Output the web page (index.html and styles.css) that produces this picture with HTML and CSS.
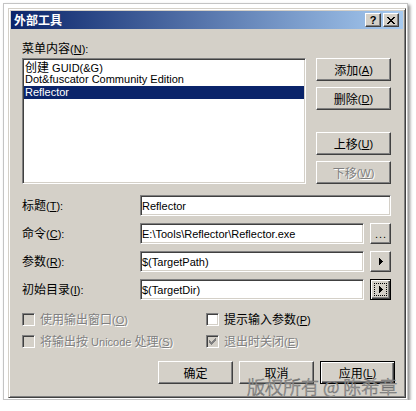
FILE: index.html
```html
<!DOCTYPE html>
<html>
<head>
<meta charset="utf-8">
<title>外部工具</title>
<link rel="stylesheet" href="styles.css">
</head>
<body>
<div class="frame">
  <div class="dialog">
    <div class="titlebar">
      <span class="title">外部工具</span>
      <div class="tbtns">
        <div class="tbtn help">?</div>
        <div class="tbtn close">
          <svg width="8" height="7" viewBox="0 0 8 7" shape-rendering="crispEdges"><path d="M0 0h2v1H0z M6 0h2v1H6z M1 1h2v1H1z M5 1h2v1H5z M2 2h4v1H2z M3 3h2v1H3z M2 4h4v1H2z M1 5h2v1H1z M5 5h2v1H5z M0 6h2v1H0z M6 6h2v1H6z" fill="#000"/></svg>
        </div>
      </div>
    </div>
    <div class="content">
      <div class="top">
        <div class="listcol">
          <div class="lbl"><span class="zh">菜单内容</span>(<u>N</u>):</div>
          <div class="listbox">
            <div class="item"><span class="zh">创建</span> GUID(&amp;G)</div>
            <div class="item">Dot&amp;fuscator Community Edition</div>
            <div class="item sel">Reflector</div>
          </div>
        </div>
        <div class="btncol">
          <div class="btn b1"><span class="zh">添加</span>(<u>A</u>)</div>
          <div class="btn b2"><span class="zh">删除</span>(<u>D</u>)</div>
          <div class="btn b3"><span class="zh">上移</span>(<u>U</u>)</div>
          <div class="btn b4 dis"><span class="zh">下移</span>(<u>W</u>)</div>
        </div>
      </div>

      <div class="fields">
        <div class="frow">
          <div class="flbl"><span class="zh">标题</span>(<u>T</u>):</div>
          <div class="field wide">Reflector</div>
        </div>
        <div class="frow">
          <div class="flbl"><span class="zh">命令</span>(<u>C</u>):</div>
          <div class="field">E:\Tools\Reflector\Reflector.exe</div>
          <div class="sbtn dots">...</div>
        </div>
        <div class="frow">
          <div class="flbl"><span class="zh">参数</span>(<u>R</u>):</div>
          <div class="field">$(TargetPath)</div>
          <div class="sbtn arrow">
            <svg width="4" height="7" viewBox="0 0 4 7" shape-rendering="crispEdges"><path d="M0 0h1v7H0z M1 1h1v5H1z M2 2h1v3H2z M3 3h1v1H3z" fill="#000"/></svg>
          </div>
        </div>
        <div class="frow">
          <div class="flbl"><span class="zh">初始目录</span>(<u>I</u>):</div>
          <div class="field">$(TargetDir)</div>
          <div class="sbtn arrow focus">
            <svg width="4" height="7" viewBox="0 0 4 7" shape-rendering="crispEdges"><path d="M0 0h1v7H0z M1 1h1v5H1z M2 2h1v3H2z M3 3h1v1H3z" fill="#000"/></svg>
          </div>
        </div>
      </div>

      <div class="checks">
        <div class="chk dis"><span class="box"></span><span class="ctext"><span class="zh">使用输出窗口</span>(<u>O</u>)</span></div>
        <div class="chk"><span class="box"></span><span class="ctext"><span class="zh">提示输入参数</span>(<u>P</u>)</span></div>
        <div class="chk dis"><span class="box"></span><span class="ctext"><span class="zh">将输出按</span> Unicode <span class="zh">处理</span>(<u>S</u>)</span></div>
        <div class="chk dis"><span class="box checked"><svg width="7" height="7" viewBox="0 0 7 7" shape-rendering="crispEdges"><path d="M6 0h1v1H6z M5 1h2v1H5z M0 2h1v1H0z M4 2h3v1H4z M0 3h2v1H0z M3 3h3v1H3z M0 4h5v1H0z M1 5h3v1H1z M2 6h1v1H2z" fill="#808080"/></svg></span><span class="ctext"><span class="zh">退出时关闭</span>(<u>E</u>)</span></div>
      </div>

      <div class="actions">
        <div class="btn"><span class="zh">确定</span></div>
        <div class="btn"><span class="zh">取消</span></div>
        <div class="btn default"><span class="zh">应用</span>(<u>L</u>)</div>
      </div>
    </div>
  </div>
  <div class="watermark">版权所有 @ 陈希章</div>
</div>
</body>
</html>
```

FILE: styles.css
```css
* {
  box-sizing: border-box;
}

html,
body {
  margin: 0;
  padding: 0;
  background: #fff;
}

body {
  font-family: "Liberation Sans", "Noto Sans CJK SC", sans-serif;
  font-size: 11px;
  color: #000;
}

.zh {
  font-family: "Noto Sans CJK SC", sans-serif;
  font-size: 12px;
}

.frame {
  position: relative;
  margin: 3px 0 0 3px;
  width: 405px;
  border: 1px solid #c4c4c4;
  padding: 4px 1px 1px 4px;
  background: #fff;
  box-shadow: 2px 2px 3px rgba(0, 0, 0, 0.45);
}

.dialog {
  width: 398px;
  height: 390px;
  border: 1px solid;
  border-color: #d4d0c8 #404040 #404040 #d4d0c8;
  box-shadow: inset 1px 1px #fff, inset -1px -1px #808080;
  padding: 2px;
  background: #d4d0c8;
  display: flex;
  flex-direction: column;
}

.titlebar {
  height: 18px;
  flex: none;
  background: linear-gradient(to right, #0a246a, #a6caf0);
  display: flex;
  align-items: center;
  justify-content: space-between;
  padding: 0 4px 0 3px;
}

.title {
  color: #fff;
  font-family: "Noto Sans CJK SC", sans-serif;
  font-weight: bold;
  font-size: 12px;
  line-height: 18px;
}

.tbtns {
  display: flex;
  gap: 2px;
}

.tbtn {
  width: 16px;
  height: 14px;
  background: #d4d0c8;
  border: 1px solid;
  border-color: #fff #404040 #404040 #fff;
  box-shadow: inset -1px -1px #808080, inset 1px 1px #d4d0c8;
  display: flex;
  align-items: center;
  justify-content: center;
}

.help {
  font-family: "Liberation Sans", sans-serif;
  font-weight: bold;
  font-size: 11px;
  line-height: 12px;
}

.content {
  flex: 1;
  padding: 11px 12px 0 11px;
  display: flex;
  flex-direction: column;
}

.top {
  display: flex;
  gap: 10px;
  height: 144px;
  flex: none;
}

.listcol {
  width: 284px;
}

.lbl {
  height: 18px;
  line-height: 16px;
}

.listbox {
  height: 126px;
  background: #fff;
  border: 1px solid;
  border-color: #808080 #fff #fff #808080;
  box-shadow: inset 1px 1px #404040, inset -1px -1px #d4d0c8;
  padding: 1px;
}

.item {
  height: 13px;
  line-height: 13px;
  padding-left: 1px;
  white-space: nowrap;
}

.item.sel {
  background: #0a246a;
  color: #fff;
}

.btncol {
  width: 75px;
  display: flex;
  flex-direction: column;
  padding-top: 18px;
}

.btn {
  width: 75px;
  height: 23px;
  flex: none;
  display: flex;
  align-items: center;
  justify-content: center;
  line-height: 14px;
  background: #d4d0c8;
  border: 1px solid;
  border-color: #fff #404040 #404040 #fff;
  box-shadow: inset -1px -1px #808080, inset 1px 1px #d4d0c8;
  white-space: nowrap;
}

.b2 {
  margin-top: 6px;
}

.b3 {
  margin-top: 22px;
}

.b4 {
  margin-top: 6px;
}

.dis,
.chk.dis .ctext {
  color: #808080;
  text-shadow: 1px 1px 0 #fff;
}

.fields {
  margin-top: 11px;
  display: flex;
  flex-direction: column;
  gap: 7px;
}

.frow {
  display: flex;
  align-items: center;
  height: 21px;
}

.flbl {
  width: 118px;
  line-height: 14px;
}

.field {
  width: 224px;
  height: 21px;
  background: #fff;
  border: 1px solid;
  border-color: #808080 #fff #fff #808080;
  box-shadow: inset 1px 1px #404040, inset -1px -1px #d4d0c8;
  padding: 0 0 0 1px;
  display: flex;
  align-items: center;
  white-space: nowrap;
  overflow: hidden;
}

.field.wide {
  width: 251px;
}

.sbtn {
  position: relative;
  width: 21px;
  height: 21px;
  margin-left: 6px;
  background: #d4d0c8;
  border: 1px solid;
  border-color: #fff #404040 #404040 #fff;
  box-shadow: inset -1px -1px #808080, inset 1px 1px #d4d0c8;
  display: flex;
  align-items: center;
  justify-content: center;
}

.sbtn.dots {
  align-items: flex-end;
  padding-bottom: 3px;
  line-height: 11px;
  letter-spacing: 1px;
  padding-left: 1px;
}

.sbtn.arrow svg {
  margin-left: 1px;
}

.sbtn.focus {
  border-color: #000;
  box-shadow: inset 1px 1px #fff, inset -1px -1px #404040, inset -2px -2px #808080;
}

.sbtn.focus::after {
  content: "";
  position: absolute;
  left: 3px;
  top: 3px;
  right: 3px;
  bottom: 3px;
  border: 1px dotted #000;
}

.checks {
  margin-top: 13px;
  display: grid;
  grid-template-columns: 184px auto;
  row-gap: 9px;
}

.chk {
  display: flex;
  align-items: center;
  height: 13px;
  gap: 5px;
  white-space: nowrap;
  line-height: 13px;
}

.box {
  position: relative;
  width: 13px;
  height: 13px;
  flex: none;
  background: #fff;
  border: 1px solid;
  border-color: #808080 #fff #fff #808080;
  box-shadow: inset 1px 1px #404040, inset -1px -1px #d4d0c8;
}

.chk.dis .box {
  background: #d4d0c8;
}

.box.checked svg {
  position: absolute;
  left: 2px;
  top: 2px;
}

.actions {
  margin-top: 13px;
  margin-right: -4px;
  display: flex;
  justify-content: flex-end;
  gap: 6px;
}

.btn.default {
  border-color: #000;
  box-shadow: inset 1px 1px #fff, inset -1px -1px #404040, inset -2px -2px #808080;
}

.watermark {
  position: absolute;
  left: 243px;
  top: 372px;
  font-family: "Noto Sans CJK SC", sans-serif;
  font-weight: 300;
  font-size: 18px;
  line-height: 20px;
  color: rgba(240, 240, 240, 0.85);
  -webkit-text-stroke: 0.6px #6e6e6e;
  white-space: pre;
}
```
